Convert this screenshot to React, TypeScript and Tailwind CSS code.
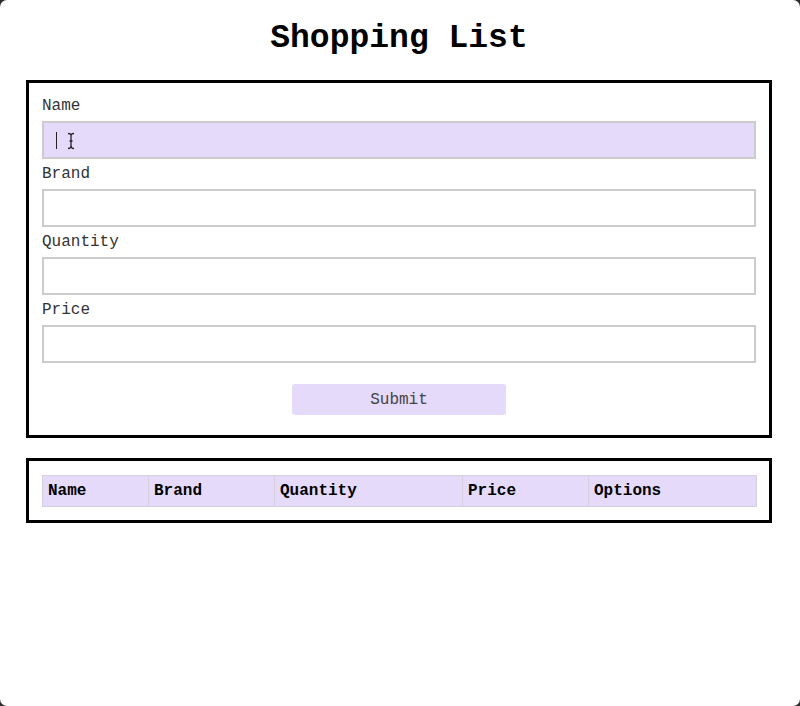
import React from "react";

const mono = { fontFamily: '"Liberation Mono", "Courier New", monospace' };

function Field({ label, focused }: { label: string; focused?: boolean }) {
  return (
    <div className="flex flex-col">
      <label className="h-[20px] leading-[20px] text-[16px] text-[#333] mb-[5px]">{label}</label>
      <div
        className={
          "relative h-[38px] border-2 border-[#cccccc] " + (focused ? "bg-[#e6dafa]" : "bg-white")
        }
      >
        {focused && (
          <>
            <span className="absolute left-[12px] top-[9px] w-[1px] h-[17px] bg-[#222]" />
            <svg className="absolute left-[23px] top-[9px]" width="8" height="18" viewBox="0 0 8 18">
              <path d="M1 1.5 Q4 1.5 4 4 L4 14 Q4 16.5 7 16.5 M7 1.5 Q4 1.5 4 4 M4 14 Q4 16.5 1 16.5 M2.5 9 L5.5 9" stroke="#222" strokeWidth="1.3" fill="none" />
            </svg>
          </>
        )}
      </div>
    </div>
  );
}

export default function App() {
  const cols: [string, string][] = [
    ["Name", "w-[106px]"],
    ["Brand", "w-[126px]"],
    ["Quantity", "w-[188px]"],
    ["Price", "w-[126px]"],
    ["Options", "w-[168px]"],
  ];
  return (
    <div className="h-[706px] bg-[#2a2a2a]">
      <div className="h-full bg-white rounded-[7px] pl-[26px] pr-[28px] pt-[19px]" style={mono}>
        <h1 className="text-[33px] leading-[40px] font-bold text-center text-black mb-[21px]">
          Shopping List
        </h1>
        <div className="border-[3px] border-black px-[13px] pt-[13px] pb-[20px]">
          <div className="flex flex-col gap-[5px]">
            <Field label="Name" focused />
            <Field label="Brand" />
            <Field label="Quantity" />
            <Field label="Price" />
          </div>
          <div className="flex justify-center mt-[21px]">
            <button className="w-[214px] h-[31px] rounded-[3px] bg-[#e6dafa] text-[16px] text-[#444]">
              Submit
            </button>
          </div>
        </div>
        <div className="mt-[20px] border-[3px] border-black px-[13px] pt-[14px] pb-[13px]">
          <table className="w-full border-collapse table-fixed">
            <thead>
              <tr className="bg-[#e6dafa]">
                {cols.map(([c, w]) => (
                  <th
                    key={c}
                    className={w + " h-[31px] border border-[#d6d0de] text-left font-bold text-[16px] text-black px-[5px]"}
                  >
                    {c}
                  </th>
                ))}
              </tr>
            </thead>
          </table>
        </div>
      </div>
    </div>
  );
}
